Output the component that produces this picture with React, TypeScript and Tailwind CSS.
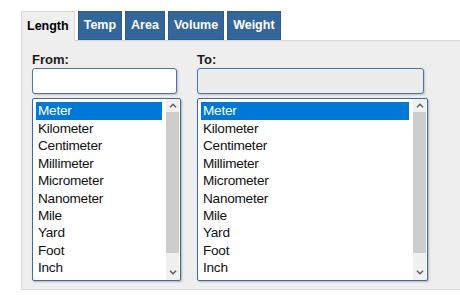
import React from "react";

const units = [
  "Meter",
  "Kilometer",
  "Centimeter",
  "Millimeter",
  "Micrometer",
  "Nanometer",
  "Mile",
  "Yard",
  "Foot",
  "Inch",
];

const tabs = ["Length", "Temp", "Area", "Volume", "Weight"];

const Chevron = ({ up }: { up?: boolean }) => (
  <svg width="8" height="5" viewBox="0 0 8 5">
    <path
      d={up ? "M1 4.2 L4 1.2 L7 4.2" : "M1 0.8 L4 3.8 L7 0.8"}
      fill="none"
      stroke="#5a5a5a"
      strokeWidth="1.4"
    />
  </svg>
);

const UnitList = ({ width }: { width: string }) => (
  <div
    className={`${width} h-[183px] flex bg-white border border-[#3d6aa1] rounded-[2px] shadow-[1px_1px_2px_rgba(0,0,0,0.25)]`}
  >
    <ul className="flex-1 pt-[3px] pl-[3px] pr-[4px]">
      {units.map((u, i) => (
        <li
          key={u}
          className={`h-[17.4px] leading-[17.4px] pl-[2px] text-[13.6px] tracking-[-0.25px] ${
            i === 0 ? "bg-[#0078d7] text-white h-[18px]" : "text-[#111]"
          }`}
        >
          {u}
        </li>
      ))}
    </ul>
    {/* scrollbar */}
    <div className="w-[13px] mr-px flex flex-col bg-[#f0f0f0]">
      <div className="h-[13px] flex items-center justify-center">
        <Chevron up />
      </div>
      <div className="h-[141px] bg-[#cdcdcd]" />
      <div className="flex-1 flex items-end justify-center pb-[5px]">
        <Chevron />
      </div>
    </div>
  </div>
);

export default function App() {
  return (
    <div className="w-[460px] h-[295px] bg-white pt-[11px] pl-[21px] font-['Liberation_Sans',Arial,sans-serif] overflow-hidden">
      {/* tabs */}
      <div className="flex items-start gap-[3px] h-[29px] relative z-10">
        {tabs.map((t, i) =>
          i === 0 ? (
            <div
              key={t}
              className="h-[30px] px-[5px] flex items-center bg-[#efefef] border border-b-0 border-[#d6d6d6] text-[12.5px] font-bold text-black"
            >
              {t}
            </div>
          ) : (
            <div
              key={t}
              className="h-[29px] px-[5px] flex items-center bg-[#336699] border border-[#2c5c8c] text-[12.5px] font-bold text-white"
            >
              {t}
            </div>
          )
        )}
      </div>

      {/* panel */}
      <div className="h-[250px] bg-[#eeeeee] border-t border-b border-l border-[#d9d9d9] pt-[11px] pl-[10px] flex gap-[16px]">
        <div className="flex flex-col">
          <label className="text-[13px] font-bold text-[#1a1a1a] leading-[15px] mb-[1px]">
            From:
          </label>
          <div className="w-[145px] h-[26px] bg-white border border-[#4d74a6] rounded-[3px] shadow-[1px_1px_2px_rgba(0,0,0,0.2)]" />
          <div className="mt-[4px]">
            <UnitList width="w-[149px]" />
          </div>
        </div>
        <div className="flex flex-col">
          <label className="text-[13px] font-bold text-[#1a1a1a] leading-[15px] mb-[1px]">
            To:
          </label>
          <div className="w-[227px] h-[26px] bg-[#ececec] border border-[#4d74a6] rounded-[3px] shadow-[1px_1px_2px_rgba(0,0,0,0.2)]" />
          <div className="mt-[4px]">
            <UnitList width="w-[231px]" />
          </div>
        </div>
      </div>
    </div>
  );
}
